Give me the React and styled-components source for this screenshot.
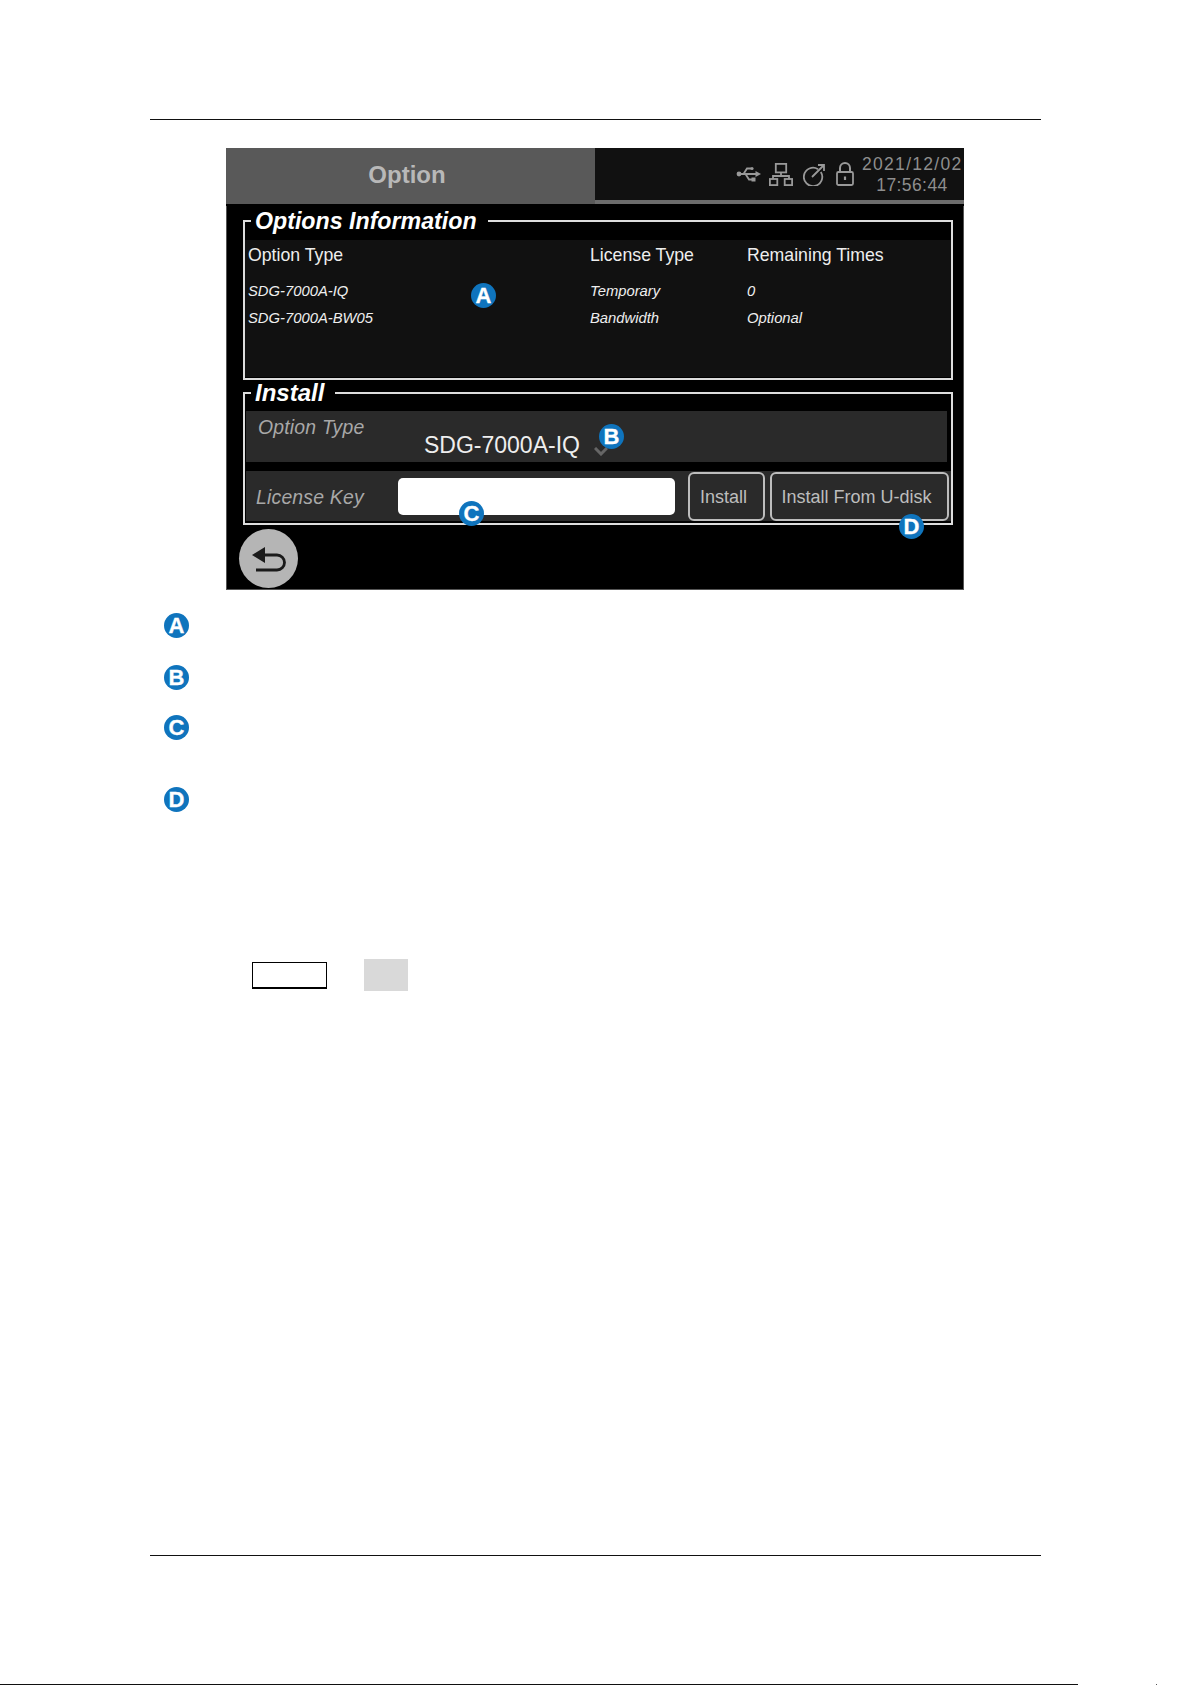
import React from "react";
import styled, { createGlobalStyle } from "styled-components";

const GlobalStyle = createGlobalStyle`
  html, body {
    margin: 0;
    padding: 0;
    background: #fff;
  }
  body {
    font-family: "Liberation Sans", Arial, sans-serif;
  }
`;

const Page = styled.div`
  width: 1192px;
  height: 1685px;
  padding-top: 119px;
  box-sizing: border-box;
  display: flex;
  flex-direction: column;
  overflow: hidden;
`;

const Rule = styled.div`
  width: 891px;
  height: 1px;
  margin-left: 150px;
  background: #111;
`;

const Screen = styled.div`
  position: relative;
  width: 738px;
  margin: 28px 0 0 226px;
  background: #000;
`;

const Header = styled.div`
  display: flex;
  height: 56px;
  background: #6c6c6c;
`;

const TitleTab = styled.div`
  width: 369px;
  display: flex;
  align-items: center;
  justify-content: center;
  padding: 0 7px 2px 0;
  box-sizing: border-box;
  background: #595959;
  color: #b8b8b8;
  font-size: 24px;
  font-weight: bold;
`;

const StatusBar = styled.div`
  flex: 1;
  height: 52px;
  display: flex;
  align-items: center;
  justify-content: flex-end;
  padding: 0 2px 0 0;
  box-sizing: border-box;
  background: #111;
  color: #8e8e8e;
`;

const StatusIcon = styled.svg`
  display: block;
  flex: none;
  margin-right: ${(p) => p.$gap}px;
  fill: none;
  stroke: #999;
  stroke-width: 1.8;
`;

const Clock = styled.div`
  width: 100px;
  padding-top: 2px;
  text-align: center;
  font-size: 17.5px;
  line-height: 21.5px;
  letter-spacing: 0.4px;
`;

const ClockDate = styled.div`
  white-space: nowrap;
  letter-spacing: 1.3px;
`;

const Body = styled.div`
  height: 384px;
  box-sizing: border-box;
  border: 1px solid #555;
  border-top: 0;
`;

const Panel = styled.fieldset`
  width: 710px;
  height: ${(p) => p.$height}px;
  margin: ${(p) => p.$top}px 0 0 16px;
  padding: 0;
  box-sizing: border-box;
  border: 2px solid #ddd;
  min-width: 0;
`;

const PanelTitle = styled.legend`
  margin-left: 6px;
  padding: 0 11px 0 4px;
  color: #fff;
  font-size: ${(p) => p.$size}px;
  font-weight: bold;
  font-style: italic;
  line-height: ${(p) => p.$line}px;
`;

const InfoTable = styled.div`
  height: 137px;
  margin-top: 4px;
  padding: 4px 0 0 3px;
  box-sizing: border-box;
  background: #111;
  display: grid;
  grid-template-columns: 342px 157px 1fr;
  grid-auto-rows: 27px;
  align-content: start;
`;

const HeadCell = styled.div`
  height: 34px;
  color: #eee;
  font-size: 17.7px;
  line-height: 22px;
`;

const RowCell = styled.div`
  color: #eee;
  font-size: 14.8px;
  font-style: italic;
  line-height: 27px;
  margin-top: 7px;
`;

const OptionRow = styled.div`
  width: 701px;
  height: 51px;
  margin: 5px 0 0 1px;
  padding-left: 12px;
  box-sizing: border-box;
  background: #2a2a2a;
  display: flex;
`;

const FieldLabel = styled.div`
  flex: none;
  width: ${(p) => p.$width}px;
  padding-top: 2px;
  color: #a8a8a8;
  font-size: 19.4px;
  font-style: italic;
  letter-spacing: 0.2px;
`;

const OptionLabel = styled(FieldLabel)`
  padding-top: 5px;
`;

const OptionValue = styled.div`
  align-self: flex-end;
  padding-bottom: 3px;
  color: #eee;
  font-size: 23px;
`;

const Chevron = styled.svg`
  align-self: flex-end;
  margin: 0 0 6px 14px;
  fill: none;
  stroke: #666;
  stroke-width: 3;
`;

const KeyRow = styled.div`
  width: 705px;
  height: 50px;
  margin: 9px 0 0 1px;
  padding-left: 10px;
  box-sizing: border-box;
  background: #2a2a2a;
  display: flex;
  align-items: center;
`;

const KeyInput = styled.div`
  flex: none;
  width: 277px;
  height: 37px;
  margin-right: 13px;
  background: #fff;
  border-radius: 5px;
`;

const ActionButton = styled.button`
  flex: none;
  width: ${(p) => p.$width}px;
  height: 49px;
  margin-right: 5px;
  padding: 3px 6px 0 0;
  box-sizing: border-box;
  background: #2a2a2a;
  border: 2px solid #bdbdbd;
  border-radius: 6px;
  color: #bdbdbd;
  font-family: inherit;
  font-size: 18px;
`;

const BackButton = styled.button`
  display: flex;
  align-items: center;
  justify-content: center;
  width: 59px;
  height: 59px;
  margin: 4px 0 0 12px;
  padding: 0;
  border: 0;
  border-radius: 50%;
  background: #b5b5b5;
`;

const Badge = styled.span`
  display: flex;
  align-items: center;
  justify-content: center;
  width: 25px;
  height: 25px;
  border-radius: 50%;
  background: #0f74bd;
  color: #fff;
  font-size: 22px;
  font-weight: bold;
  line-height: 1;
  -webkit-text-stroke: 0.3px #fff;
`;

const Callout = styled(Badge)`
  position: absolute;
  left: ${(p) => p.$x}px;
  top: ${(p) => p.$y}px;
`;

const KeyList = styled.div`
  margin: 23px 0 0 164px;
  display: flex;
  flex-direction: column;
`;

const KeyItem = styled.div`
  height: ${(p) => p.$height}px;
`;

const Swatches = styled.div`
  display: flex;
  align-items: center;
  margin: 147px 0 0 252px;
`;

const OutlineSwatch = styled.div`
  width: 75px;
  height: 27px;
  box-sizing: border-box;
  border: 1px solid #000;
  border-bottom-width: 2px;
  margin-right: 37px;
`;

const GreySwatch = styled.div`
  width: 44px;
  height: 32px;
  background: #d9d9d9;
`;

const BottomArea = styled.div`
  margin-top: auto;
`;

const EdgeRow = styled.div`
  display: flex;
  align-items: flex-end;
  height: 1px;
  margin-top: 128px;
`;

const EdgeLine = styled.div`
  width: 1078px;
  height: 1px;
  background: #111;
`;

const EdgeDot = styled.div`
  width: 1px;
  height: 1px;
  margin-left: 78px;
  background: #555;
`;

const UsbIcon = () => (
  <StatusIcon $gap={8} width="25" height="18" viewBox="0 0 25 18">
    <circle cx="3" cy="9" r="2.4" fill="#999" stroke="none" />
    <path d="M3 9h17M7.500 9l3.500-5.500h4M9.500 9l3.500 5.500h3" />
    <circle cx="16" cy="3.500" r="1.600" fill="#999" stroke="none" />
    <rect x="15.500" y="12.500" width="4" height="4" fill="#999" stroke="none" />
    <path d="M19.500 6L25 9l-5.500 3z" fill="#999" stroke="none" />
  </StatusIcon>
);

const NetworkIcon = () => (
  <StatusIcon $gap={10} width="24" height="23" viewBox="0 0 24 23">
    <rect x="6.800" y="0.900" width="10.400" height="8.500" />
    <path d="M12 9.500v3.500M4 16v-3h16v3" />
    <rect x="0.900" y="16" width="7.400" height="6.100" />
    <rect x="15.700" y="16" width="7.400" height="6.100" />
  </StatusIcon>
);

const DialIcon = () => (
  <StatusIcon $gap={11} width="22" height="23" viewBox="0 0 22 23">
    <path d="M15 6.200A9.200 9.200 0 1 0 17.800 9" />
    <path d="M9 14L21 2M15 2h6v6" />
  </StatusIcon>
);

const LockIcon = () => (
  <StatusIcon $gap={8} width="18" height="24" viewBox="0 0 18 24">
    <path d="M4 10V6a5 5 0 0 1 10 0v4" strokeWidth="2" />
    <rect x="1" y="10" width="16" height="13" rx="1.500" />
    <path d="M9 14.500v3.500" strokeWidth="2.200" />
  </StatusIcon>
);

const options = [
  ["SDG-7000A-IQ", "Temporary", "0"],
  ["SDG-7000A-BW05", "Bandwidth", "Optional"],
];

export default function App() {
  return (
    <Page>
      <GlobalStyle />
      <Rule />
      <Screen>
        <Header>
          <TitleTab>Option</TitleTab>
          <StatusBar>
            <UsbIcon />
            <NetworkIcon />
            <DialIcon />
            <LockIcon />
            <Clock>
              <ClockDate>2021/12/02</ClockDate>
              17:56:44
            </Clock>
          </StatusBar>
        </Header>
        <Body>
          <Panel $height={174} $top={2}>
            <PanelTitle $line={30} $size={23.2}>Options Information</PanelTitle>
            <InfoTable>
              <HeadCell>Option Type</HeadCell>
              <HeadCell>License Type</HeadCell>
              <HeadCell>Remaining Times</HeadCell>
              {options.map((row) =>
                row.map((cell) => <RowCell key={row[0] + cell}>{cell}</RowCell>)
              )}
            </InfoTable>
          </Panel>
          <Panel $height={145} $top={0}>
            <PanelTitle $line={26} $size={24}>Install</PanelTitle>
            <OptionRow>
              <OptionLabel $width={166}>Option Type</OptionLabel>
              <OptionValue>SDG-7000A-IQ</OptionValue>
              <Chevron width="14" height="9" viewBox="0 0 14 9">
                <path d="M1 1l6 6 6-6" />
              </Chevron>
            </OptionRow>
            <KeyRow>
              <FieldLabel $width={142}>License Key</FieldLabel>
              <KeyInput />
              <ActionButton $width={77}>Install</ActionButton>
              <ActionButton $width={179}>Install From U-disk</ActionButton>
            </KeyRow>
          </Panel>
          <BackButton aria-label="Back">
            <svg width="36" height="28" viewBox="0 0 36 28" fill="none">
              <path d="M1 10L14 2v16z" fill="#1a1a1a" />
              <path
                d="M12 10h14a7.500 7.500 0 0 1 0 15H5"
                stroke="#1a1a1a"
                strokeWidth="2.800"
              />
            </svg>
          </BackButton>
        </Body>
        <Callout $x={245} $y={135}>A</Callout>
        <Callout $x={373} $y={276}>B</Callout>
        <Callout $x={233} $y={353}>C</Callout>
        <Callout $x={673} $y={366}>D</Callout>
      </Screen>
      <KeyList>
        <KeyItem $height={52}><Badge>A</Badge></KeyItem>
        <KeyItem $height={50}><Badge>B</Badge></KeyItem>
        <KeyItem $height={72}><Badge>C</Badge></KeyItem>
        <KeyItem $height={25}><Badge>D</Badge></KeyItem>
      </KeyList>
      <Swatches>
        <OutlineSwatch />
        <GreySwatch />
      </Swatches>
      <BottomArea>
        <Rule />
        <EdgeRow>
          <EdgeLine />
          <EdgeDot />
        </EdgeRow>
      </BottomArea>
    </Page>
  );
}
